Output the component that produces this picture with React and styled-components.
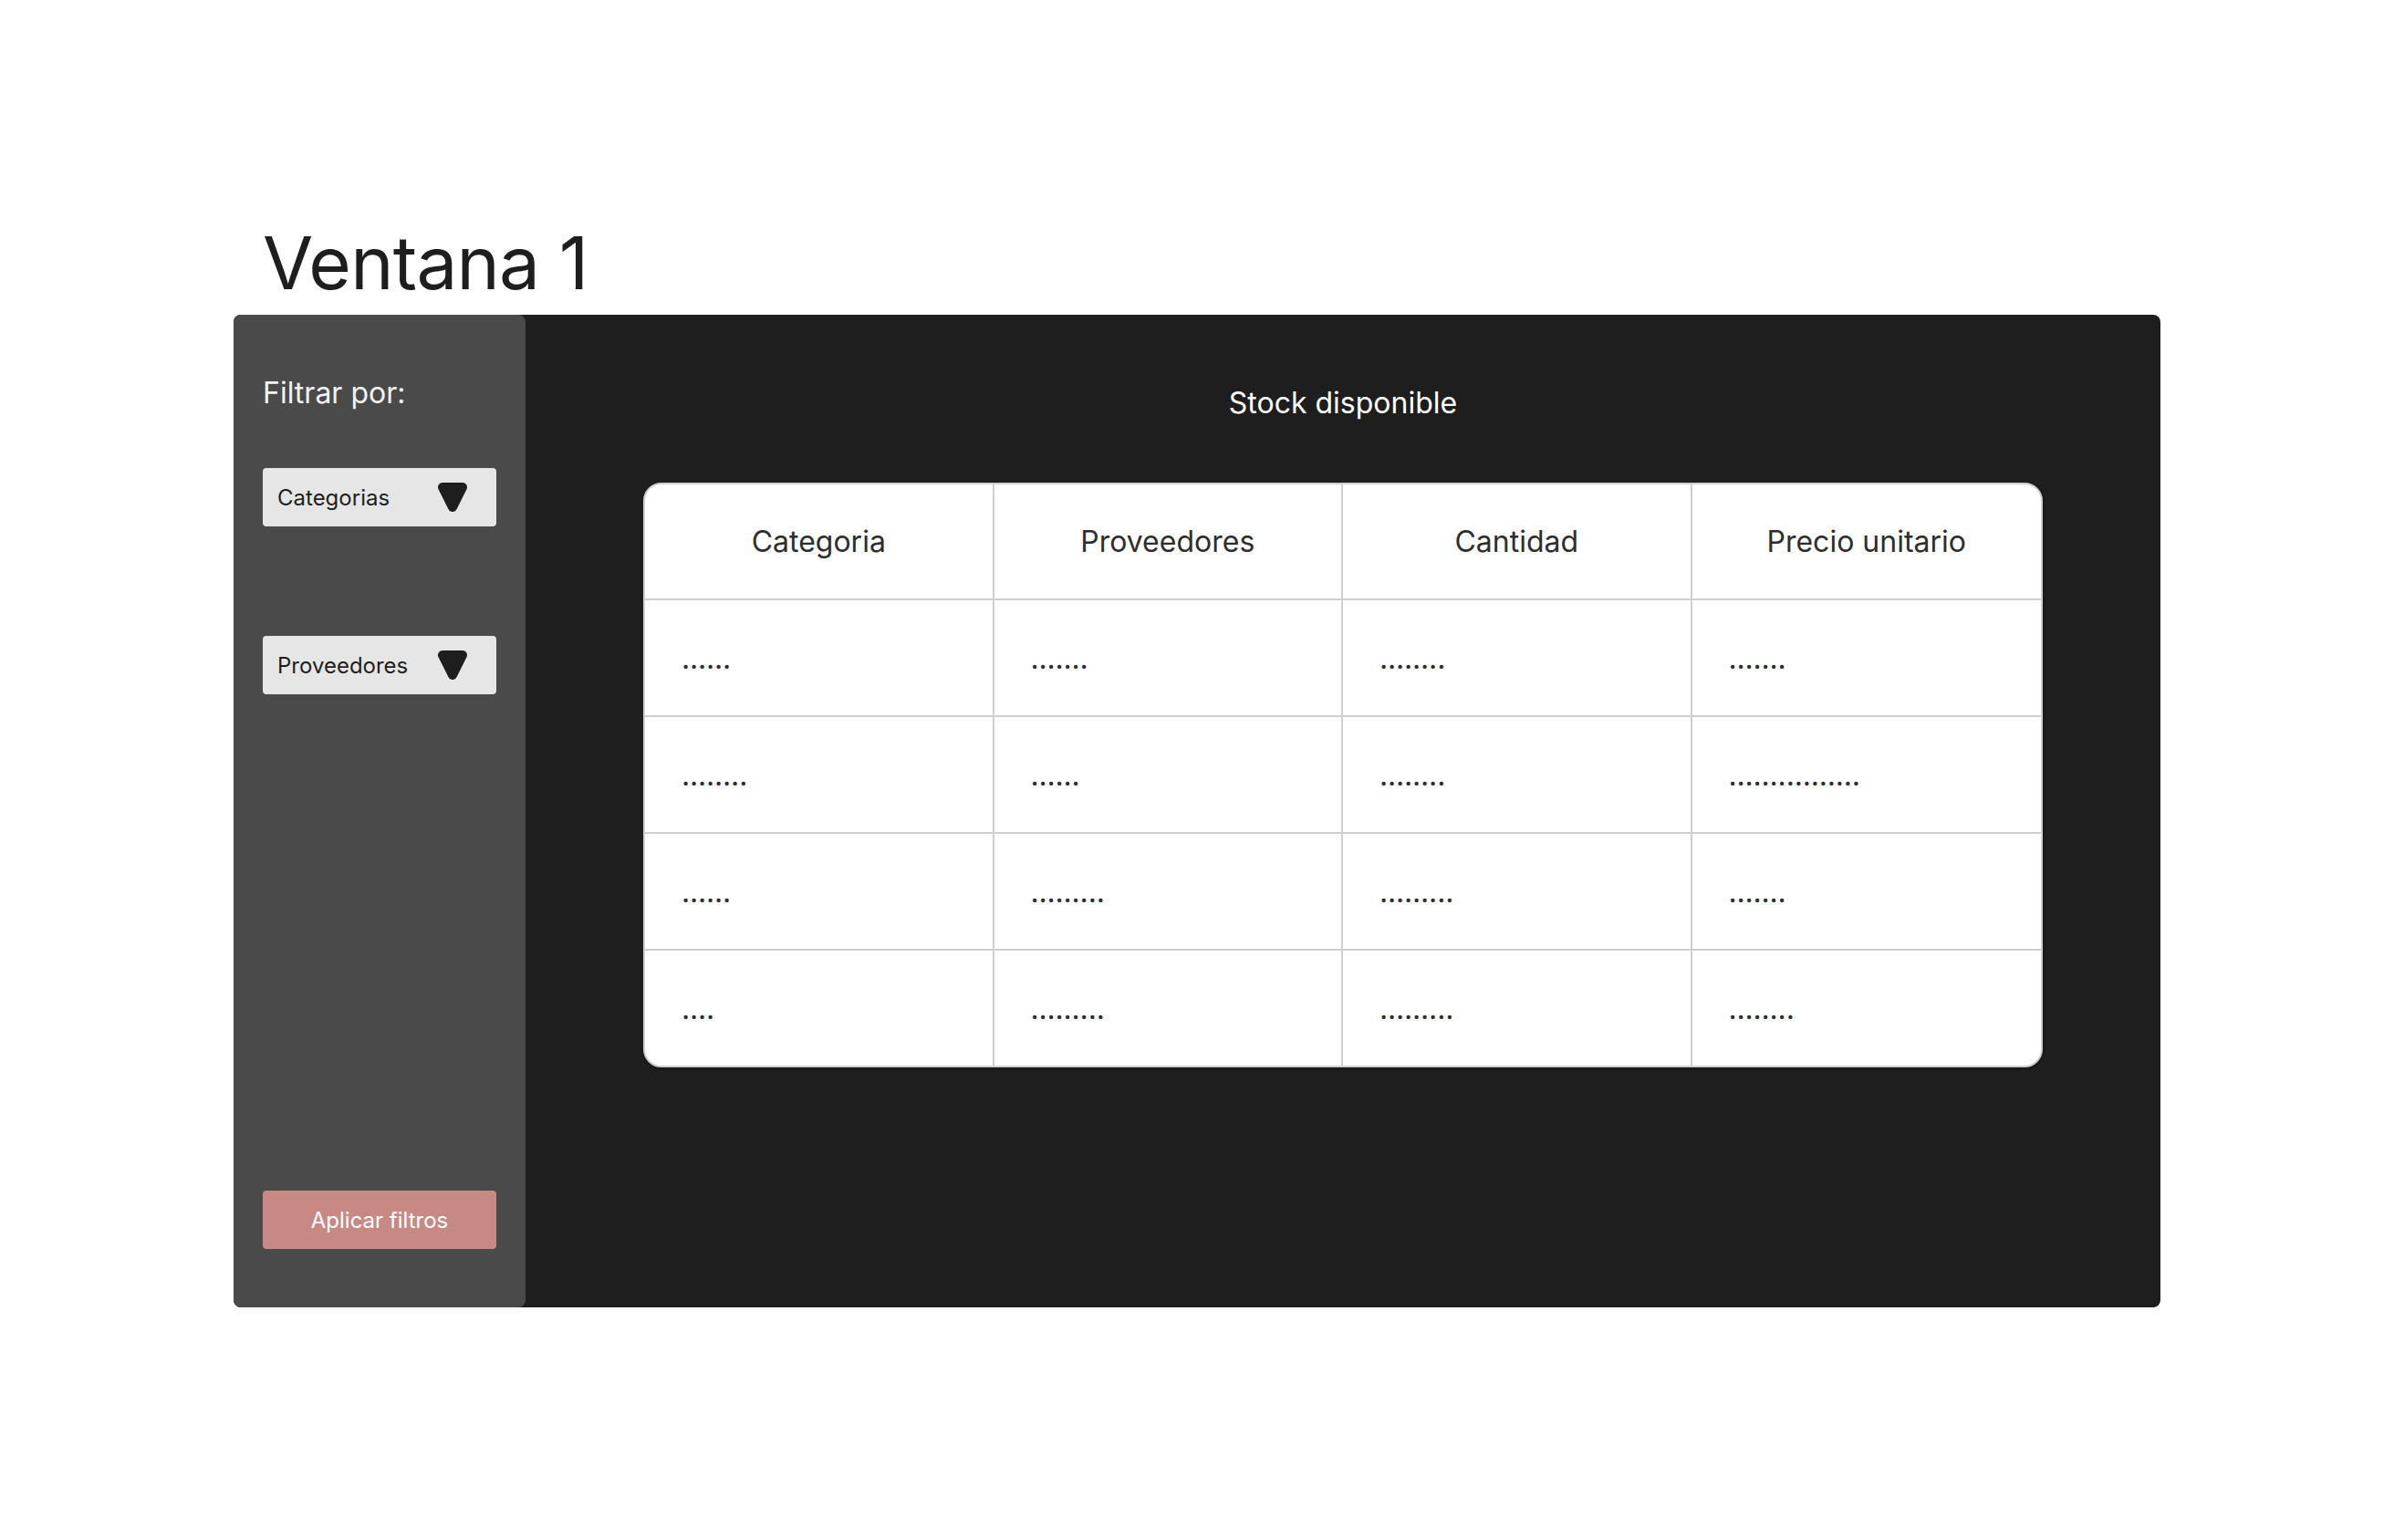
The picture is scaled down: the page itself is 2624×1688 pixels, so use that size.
import React from 'react';
import styled, { createGlobalStyle } from 'styled-components';

const GlobalStyle = createGlobalStyle`
  body {
    margin: 0;
    background: #ffffff;
    font-family: Inter, "Noto Sans", sans-serif;
  }
`;

const Page = styled.div`
  padding: 239px 0 0 256px;
`;

const Title = styled.h1`
  margin: 0 0 9px 32px;
  font-size: 80px;
  font-weight: 400;
  line-height: 97px;
  letter-spacing: -0.8px;
  color: #1e1e1e;
`;

const Window = styled.div`
  display: flex;
  width: 2112px;
  height: 1088px;
  background: #1e1e1e;
  border-radius: 8px;
`;

const Sidebar = styled.aside`
  display: flex;
  flex-direction: column;
  width: 320px;
  box-sizing: border-box;
  padding: 66px 32px 64px;
  background: #4a4a4a;
  border-radius: 8px;
`;

const FilterLabel = styled.div`
  font-size: 32px;
  color: #f2f2f2;
`;

const Select = styled.div`
  display: flex;
  align-items: center;
  justify-content: space-between;
  height: 64px;
  margin-top: ${(p) => p.$gap}px;
  padding: 0 32px 0 16px;
  background: #e6e6e6;
  border-radius: 4px;
  font-size: 24px;
  color: #1e1e1e;
`;

const ApplyButton = styled.button`
  margin-top: auto;
  height: 64px;
  border: none;
  border-radius: 4px;
  background: #c78984;
  color: #ffffff;
  font-family: Inter, sans-serif;
  font-size: 24px;
`;

const Main = styled.main`
  flex: 1;
  display: flex;
  flex-direction: column;
  align-items: center;
  padding-top: 77px;
`;

const Heading = styled.h2`
  margin: 0;
  font-size: 32px;
  font-weight: 400;
  color: #ffffff;
`;

const Table = styled.div`
  display: grid;
  grid-template-columns: repeat(4, 1fr);
  grid-template-rows: 127px repeat(3, 128px) 126px;
  width: 1534px;
  margin-top: 68px;
  box-sizing: border-box;
  background: #ffffff;
  border: 2px solid #cfcfcf;
  border-radius: 20px;
  overflow: hidden;
  box-shadow: 1px 2px 3px rgba(0, 0, 0, 0.25);
`;

const Cell = styled.div`
  display: flex;
  align-items: center;
  justify-content: ${(p) => (p.$head ? 'center' : 'flex-start')};
  padding-left: ${(p) => (p.$head ? 0 : 40)}px;
  box-sizing: border-box;
  font-size: 32px;
  letter-spacing: ${(p) => (p.$head ? 0 : -0.2)}px;
  color: #2e2e2e;
  border-right: ${(p) => (p.$lastCol ? 'none' : '2px solid #cfcfcf')};
  border-bottom: ${(p) => (p.$lastRow ? 'none' : '2px solid #cfcfcf')};
`;

const Caret = () => (
  <svg width="32" height="32" viewBox="0 0 32 32">
    <path
      d="M5 5 L27 5 L16 27 Z"
      fill="#1e1e1e"
      stroke="#1e1e1e"
      strokeWidth="10"
      strokeLinejoin="round"
    />
  </svg>
);

const headers = ['Categoria', 'Proveedores', 'Cantidad', 'Precio unitario'];
const rows = [
  [6, 7, 8, 7],
  [8, 6, 8, 16],
  [6, 9, 9, 7],
  [4, 9, 9, 8],
];

const App = () => (
  <Page>
    <GlobalStyle />
    <Title>Ventana 1</Title>
    <Window>
      <Sidebar>
        <FilterLabel>Filtrar por:</FilterLabel>
        <Select $gap={63}>
          Categorias
          <Caret />
        </Select>
        <Select $gap={120}>
          Proveedores
          <Caret />
        </Select>
        <ApplyButton>Aplicar filtros</ApplyButton>
      </Sidebar>
      <Main>
        <Heading>Stock disponible</Heading>
        <Table>
          {headers.map((h, i) => (
            <Cell key={h} $head $lastCol={i === 3}>
              {h}
            </Cell>
          ))}
          {rows.map((row, r) =>
            row.map((n, c) => (
              <Cell key={`${r}-${c}`} $lastCol={c === 3} $lastRow={r === rows.length - 1}>
                {'.'.repeat(n)}
              </Cell>
            ))
          )}
        </Table>
      </Main>
    </Window>
  </Page>
);

export default App;
